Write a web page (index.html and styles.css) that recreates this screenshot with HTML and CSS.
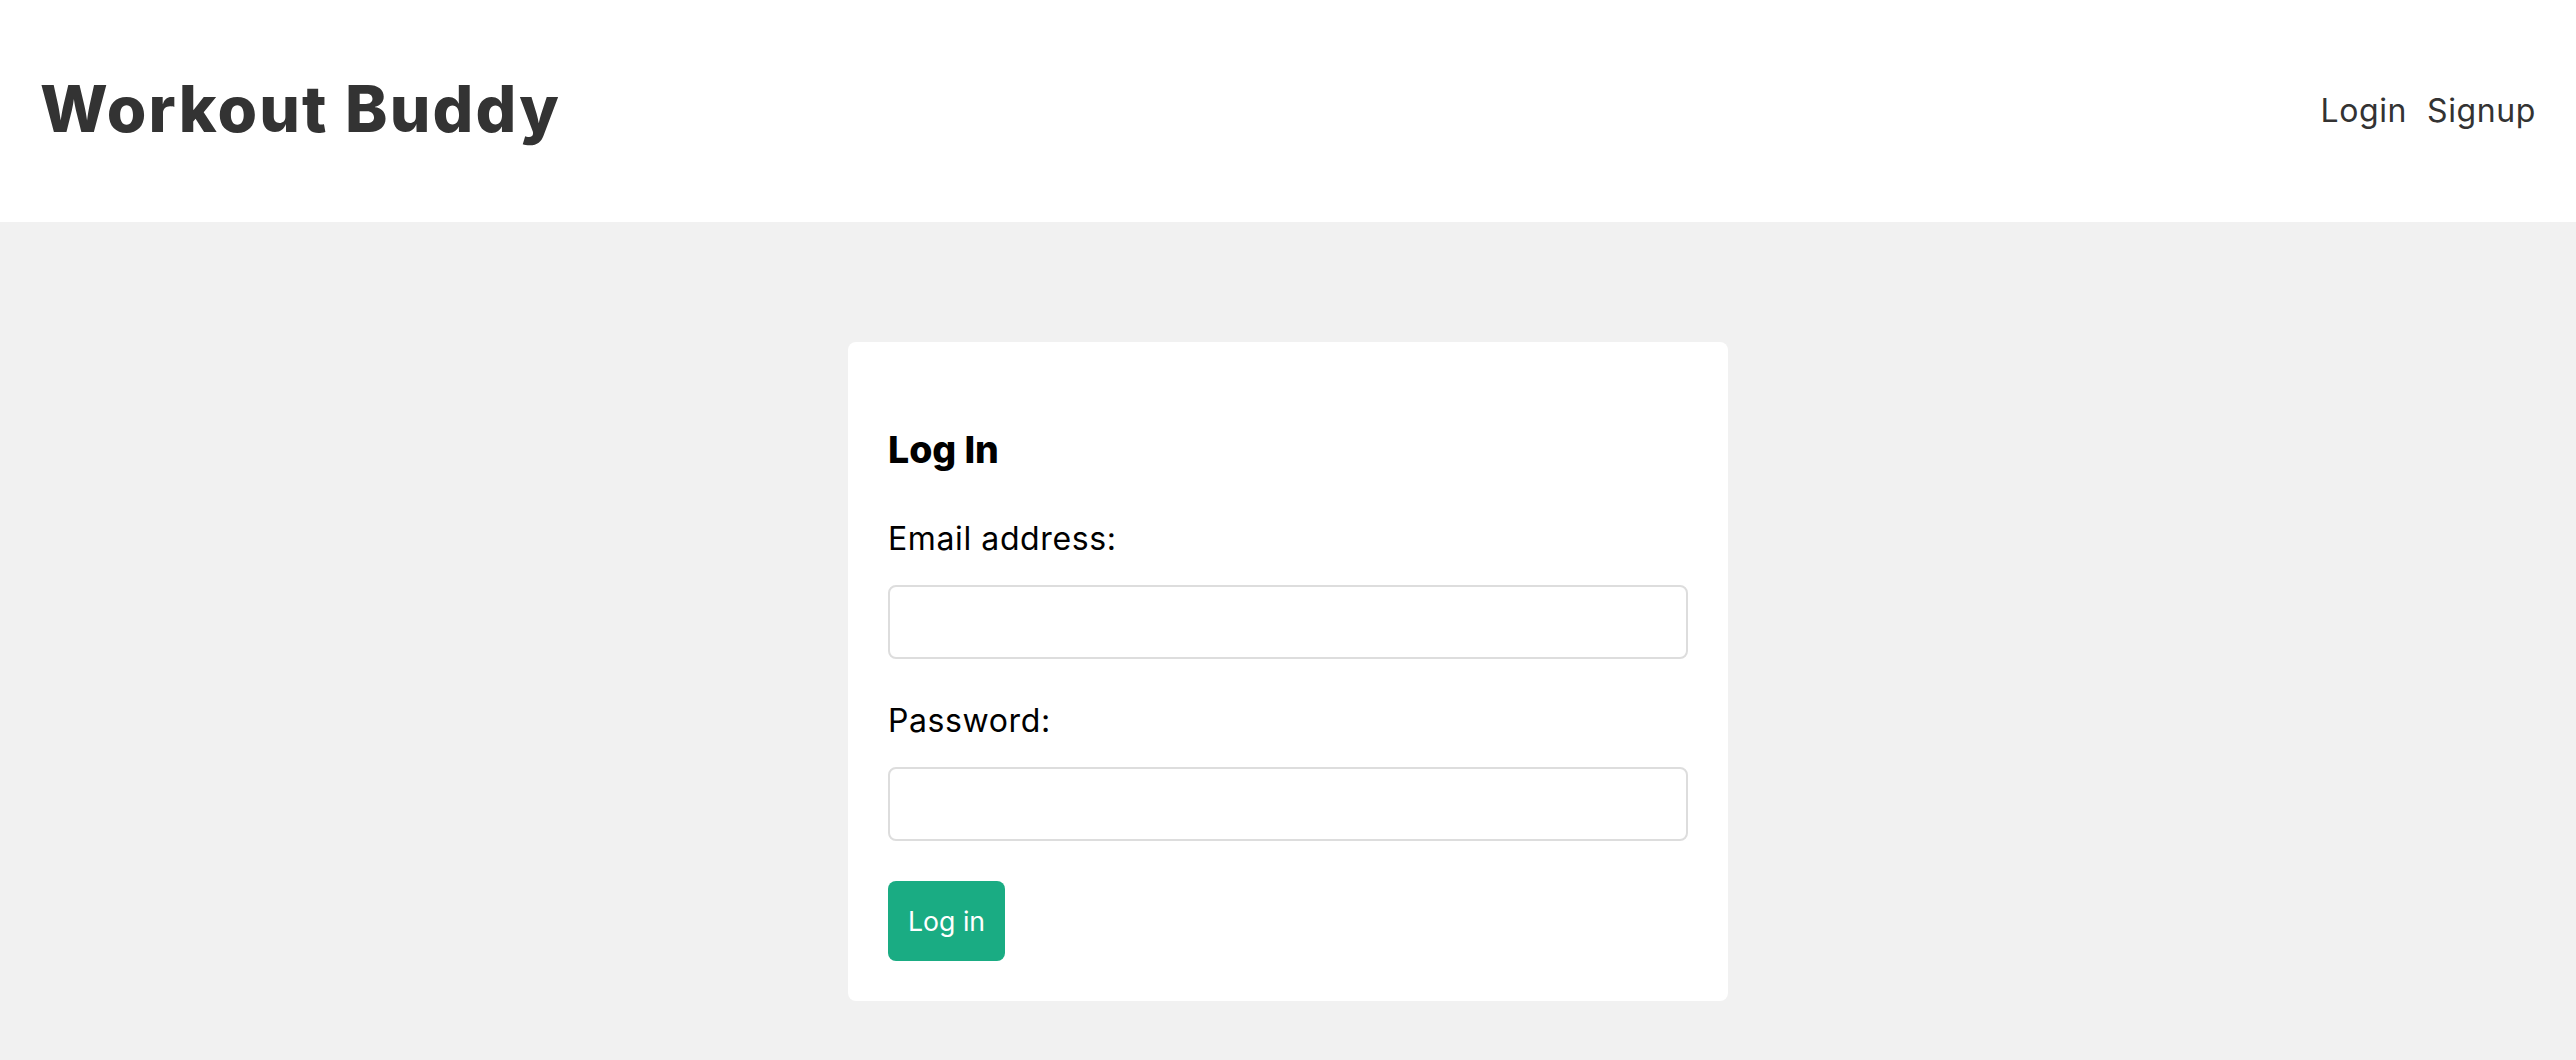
FILE: index.html
```html
<!DOCTYPE html>
<html lang="en">
<head>
<meta charset="utf-8">
<title>Workout Buddy</title>
<link rel="stylesheet" href="styles.css">
</head>
<body>
<header class="site-header">
  <div class="container">
    <a href="#" class="brand"><h1>Workout Buddy</h1></a>
    <nav class="nav">
      <a href="#">Login</a>
      <a href="#">Signup</a>
    </nav>
  </div>
</header>
<div class="pages">
  <form class="login">
    <h3>Log In</h3>
    <label>Email address:</label>
    <input type="email">
    <label>Password:</label>
    <input type="password">
    <button type="button">Log in</button>
  </form>
</div>
</body>
</html>
```
FILE: styles.css
```css
body {
  margin: 0;
  background: #f1f1f1;
  font-family: "Inter", "Noto Sans", sans-serif;
}
.site-header {
  background: #fff;
}
.site-header .container {
  padding: 20px 40px;
  display: flex;
  align-items: center;
  justify-content: space-between;
}
.site-header a {
  color: #333;
  text-decoration: none;
}
.brand h1 {
  margin: 43px 0;
  font-size: 64px;
  line-height: 92px;
  padding-bottom: 4px;
  font-weight: 800;
  letter-spacing: 2.2px;
}
.nav {
  display: flex;
  align-items: center;
}
.nav a {
  margin-left: 20px;
  font-size: 32px;
  line-height: 48px;
  letter-spacing: 0.6px;
}
.pages {
  padding: 40px 40px 20px;
}
.login {
  width: 800px;
  margin: 80px auto 0;
  padding: 40px;
  background: #fff;
  border-radius: 8px;
}
.login h3 {
  margin: 37px 0;
  font-size: 37.44px;
  line-height: 61px;
  font-weight: 800;
  color: #000;
}
.login label {
  display: block;
  font-size: 32px;
  line-height: 44px;
  padding-bottom: 4px;
  color: #000;
  letter-spacing: 0.6px;
}
.login input {
  display: block;
  width: 100%;
  box-sizing: border-box;
  height: 74px;
  padding: 20px;
  margin: 20px 0 40px;
  border: 2px solid #ddd;
  border-radius: 8px;
  font-size: 26px;
}
.login button {
  display: block;
  background: #1aac83;
  border: 0;
  color: #fff;
  padding: 20px;
  font-family: inherit;
  font-size: 26.67px;
  line-height: 40px;
  border-radius: 8px;
}
```
